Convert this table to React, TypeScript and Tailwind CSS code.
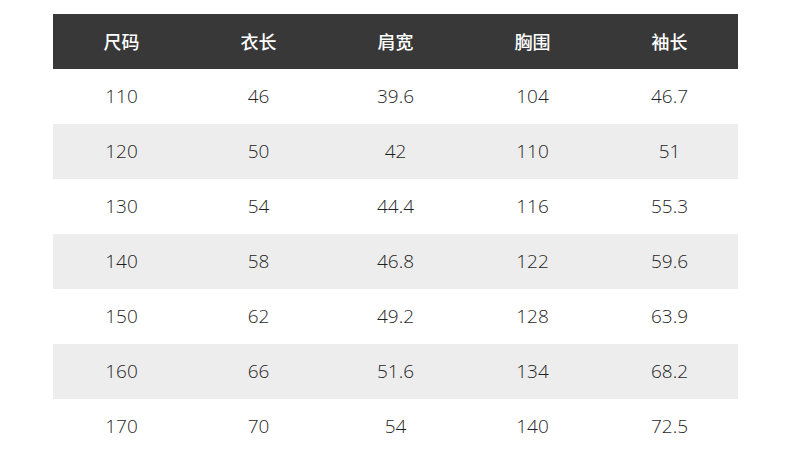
const header = ["尺码", "衣长", "肩宽", "胸围", "袖长"];

const rows = [
  ["110", "46", "39.6", "104", "46.7"],
  ["120", "50", "42", "110", "51"],
  ["130", "54", "44.4", "116", "55.3"],
  ["140", "58", "46.8", "122", "59.6"],
  ["150", "62", "49.2", "128", "63.9"],
  ["160", "66", "51.6", "134", "68.2"],
  ["170", "70", "54", "140", "72.5"],
];

export default function App() {
  return (
    <div
      className="h-[466px] w-[790px] bg-white pt-[14px]"
      style={{ fontFamily: '"Noto Sans CJK SC", "Noto Sans", sans-serif' }}
    >
      <div className="mx-[53px] w-[685px]">
        <div className="grid h-[55px] grid-cols-5 items-center bg-[#383838] text-center text-[18px] font-medium text-white">
          {header.map((h) => (
            <div key={h}>{h}</div>
          ))}
        </div>
        {rows.map((r, i) => (
          <div
            key={r[0]}
            className={
              "grid h-[55px] grid-cols-5 items-center text-center font-['Open_Sans',sans-serif] text-[19px] font-light text-[#1f1f1f] " +
              (i % 2 === 1 ? "bg-[#ededed]" : "bg-white")
            }
          >
            {r.map((c, j) => (
              <div key={j} className="-mt-px">
                {c}
              </div>
            ))}
          </div>
        ))}
      </div>
    </div>
  );
}
